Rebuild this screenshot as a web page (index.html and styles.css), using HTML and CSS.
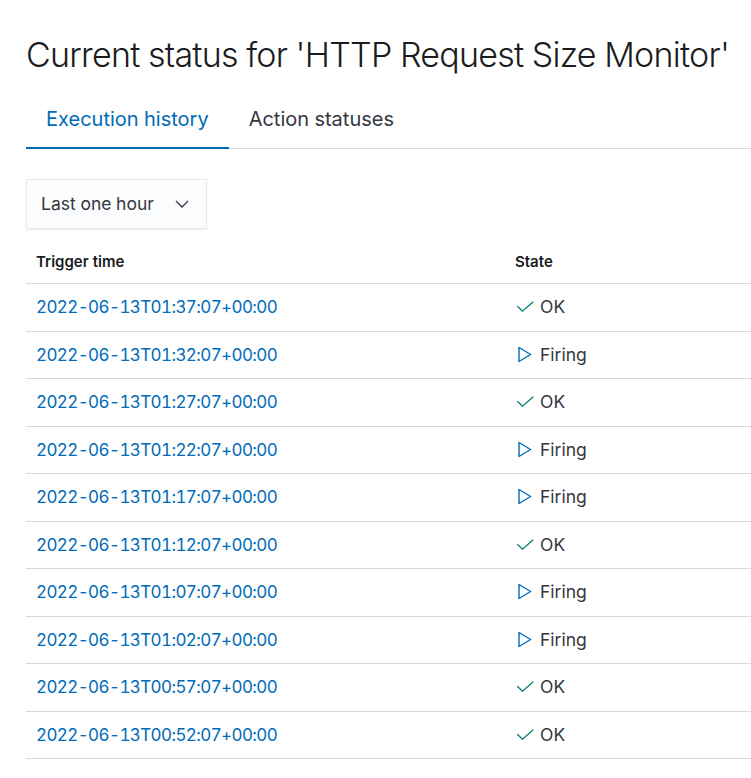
FILE: index.html
```html
<!DOCTYPE html>
<html lang="en">
<head>
<meta charset="utf-8">
<title>Current status</title>
<link rel="stylesheet" href="styles.css">
</head>
<body>
<main class="page">
  <h1 class="title">Current status for 'HTTP Request Size Monitor'</h1>
  <nav class="tabs">
    <button class="tab tab-active">Execution history</button>
    <button class="tab">Action statuses</button>
  </nav>
  <div class="select">
    <span class="select-label">Last one hour</span>
    <svg class="chev" width="14" height="8" viewBox="0 0 14 8"><path d="M1 1l6 6 6-6" fill="none" stroke="#343741" stroke-width="1.3"/></svg>
  </div>
  <table class="table">
    <thead>
      <tr><th class="c-time">Trigger time</th><th>State</th></tr>
    </thead>
    <tbody>
      <tr><td><a href="#">2022-06-13T01:37:07+00:00</a></td><td><span class="state"><svg class="ic" width="18" height="18" viewBox="0 0 18 18"><path d="M1.3 8.2L6.5 13.2 17.2 3.8" fill="none" stroke="#017d73" stroke-width="1.3"/></svg>OK</span></td></tr>
      <tr><td><a href="#">2022-06-13T01:32:07+00:00</a></td><td><span class="state"><svg class="ic" width="18" height="18" viewBox="0 0 18 18"><path d="M3 1.5v14l11.6-7z" fill="none" stroke="#006bb8" stroke-width="1.4" stroke-linejoin="round"/></svg>Firing</span></td></tr>
      <tr><td><a href="#">2022-06-13T01:27:07+00:00</a></td><td><span class="state"><svg class="ic" width="18" height="18" viewBox="0 0 18 18"><path d="M1.3 8.2L6.5 13.2 17.2 3.8" fill="none" stroke="#017d73" stroke-width="1.3"/></svg>OK</span></td></tr>
      <tr><td><a href="#">2022-06-13T01:22:07+00:00</a></td><td><span class="state"><svg class="ic" width="18" height="18" viewBox="0 0 18 18"><path d="M3 1.5v14l11.6-7z" fill="none" stroke="#006bb8" stroke-width="1.4" stroke-linejoin="round"/></svg>Firing</span></td></tr>
      <tr><td><a href="#">2022-06-13T01:17:07+00:00</a></td><td><span class="state"><svg class="ic" width="18" height="18" viewBox="0 0 18 18"><path d="M3 1.5v14l11.6-7z" fill="none" stroke="#006bb8" stroke-width="1.4" stroke-linejoin="round"/></svg>Firing</span></td></tr>
      <tr><td><a href="#">2022-06-13T01:12:07+00:00</a></td><td><span class="state"><svg class="ic" width="18" height="18" viewBox="0 0 18 18"><path d="M1.3 8.2L6.5 13.2 17.2 3.8" fill="none" stroke="#017d73" stroke-width="1.3"/></svg>OK</span></td></tr>
      <tr><td><a href="#">2022-06-13T01:07:07+00:00</a></td><td><span class="state"><svg class="ic" width="18" height="18" viewBox="0 0 18 18"><path d="M3 1.5v14l11.6-7z" fill="none" stroke="#006bb8" stroke-width="1.4" stroke-linejoin="round"/></svg>Firing</span></td></tr>
      <tr><td><a href="#">2022-06-13T01:02:07+00:00</a></td><td><span class="state"><svg class="ic" width="18" height="18" viewBox="0 0 18 18"><path d="M3 1.5v14l11.6-7z" fill="none" stroke="#006bb8" stroke-width="1.4" stroke-linejoin="round"/></svg>Firing</span></td></tr>
      <tr><td><a href="#">2022-06-13T00:57:07+00:00</a></td><td><span class="state"><svg class="ic" width="18" height="18" viewBox="0 0 18 18"><path d="M1.3 8.2L6.5 13.2 17.2 3.8" fill="none" stroke="#017d73" stroke-width="1.3"/></svg>OK</span></td></tr>
      <tr><td><a href="#">2022-06-13T00:52:07+00:00</a></td><td><span class="state"><svg class="ic" width="18" height="18" viewBox="0 0 18 18"><path d="M1.3 8.2L6.5 13.2 17.2 3.8" fill="none" stroke="#017d73" stroke-width="1.3"/></svg>OK</span></td></tr>
    </tbody>
  </table>
</main>
</body>
</html>
```

FILE: styles.css
```css
* { box-sizing: border-box; }
html, body { margin: 0; background: #fff; }
body {
  font-family: Inter, "Noto Sans", sans-serif;
  color: #343741;
  font-feature-settings: "tnum" 1, "kern" 1;
}
.page { padding: 35px 0 0 26px; }
.title {
  margin: 0;
  font-size: 34px;
  line-height: 40px;
  font-weight: 300;
  letter-spacing: -0.022em;
  color: #1a1c21;
  white-space: nowrap;
}
.tabs {
  display: flex;
  margin-top: 31px;
  border-bottom: 1px solid #d3dae6;
}
.tab {
  font-family: inherit;
  font-feature-settings: inherit;
  font-size: 20px;
  line-height: 24px;
  color: #343741;
  background: none;
  border: 0;
  padding: 1px 20px 16px;
  margin-bottom: -1px;
  border-bottom: 2px solid transparent;
  cursor: pointer;
}
.tab-active { color: #006bb8; border-bottom-color: #006bb8; }
.select {
  display: inline-flex;
  align-items: center;
  margin-top: 30px;
  width: 181px;
  height: 50px;
  padding: 0 17px 0 14px;
  justify-content: space-between;
  background: #fbfcfd;
  border: 1px solid #e6e9f0;
  box-shadow: 0 1px 2px rgba(0,0,0,0.06);
  font-size: 17.5px;
  line-height: 24px;
  color: #343741;
}
.chev { display: block; }
.table {
  width: 100%;
  margin-top: 12px;
  border-collapse: collapse;
}
.table th {
  text-align: left;
  font-size: 15px;
  font-weight: 600;
  color: #1a1c21;
  height: 42px;
  padding: 0 10px;
  border-bottom: 1px solid #d3dae6;
  vertical-align: middle;
}
.table th.c-time { width: 479px; }
.table td {
  height: 48px;
  padding: 0 10px;
  font-size: 16px;
  line-height: 24px;
  border-bottom: 1px solid #d3dae6;
  vertical-align: middle;
}
.table tbody tr:nth-child(even) td { height: 47px; }
.table a { color: #006bb8; text-decoration: none; font-size: 17px; font-feature-settings: "tnum" 1; letter-spacing: -0.6px; }
.state { display: flex; align-items: center; color: #343741; font-size: 17.5px; }
.ic { display: block; margin: 0 6px 0 1px; }
```
